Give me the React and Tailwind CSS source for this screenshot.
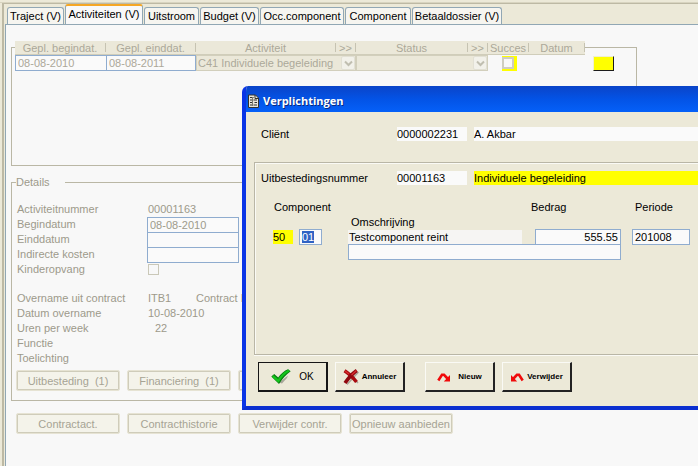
import React from "react";

const TABS = [
  { label: "Traject (V)", width: "w-[57px]" },
  { label: "Activiteiten (V)", width: "w-[78px]", active: true },
  { label: "Uitstroom", width: "w-[55px]" },
  { label: "Budget (V)", width: "w-[59px]" },
  { label: "Occ.component", width: "w-[84px]" },
  { label: "Component", width: "w-[66px]" },
  { label: "Betaaldossier (V)", width: "w-[90px]" },
];

const blueField =
  "block rounded-none border border-[#8faccf] bg-[#fafafa] px-[2px] outline-none";

function Tab({ label, width, active }) {
  return (
    <button
      type="button"
      role="tab"
      aria-selected={!!active}
      className={
        width +
        " flex shrink-0 items-center justify-center whitespace-nowrap rounded-t-[3px] border border-b-0 text-black " +
        (active
          ? "h-5 border-[#91a7b4] border-t-2 border-t-[#f5a623] bg-[#f8f8f8] pb-[3px]"
          : "h-[17px] border-[#91a7b4] bg-[#f6f5f0]")
      }
    >
      {label}
    </button>
  );
}

function DisabledSelect({ label, value }) {
  return (
    <div className="relative h-4 border border-[#d2cfbc] bg-[#ebe8d9]">
      <select
        disabled
        aria-label={label}
        defaultValue={value}
        className="block h-[14px] w-full appearance-none bg-transparent pl-px leading-[14px] text-[#aca899] opacity-100"
      >
        <option>{value}</option>
      </select>
      <span className="pointer-events-none absolute right-0 top-0 flex h-[14px] w-[14px] items-center justify-center rounded-[2px] border border-[#e2e0d4] bg-[#f2f1ea]">
        <svg viewBox="0 0 9 7" className="h-[7px] w-[9px]" fill="none" stroke="#c0beb0" strokeWidth="2">
          <path d="M1 1.5 4.5 5 8 1.5" />
        </svg>
      </span>
    </div>
  );
}

function HeaderCell({ children }) {
  return (
    <th className="bg-[#ebe8d9] p-0 font-normal">
      <div className="flex h-[14px] items-center justify-center border-b border-[#d0cdba]">
        <span className="flex-1 whitespace-nowrap text-center">{children}</span>
        <span className="h-[9px] w-px bg-[#c6c3b2]" />
      </div>
    </th>
  );
}

function ActivityTable() {
  return (
    <table className="-mt-[7px] ml-[3px] w-[600px] table-fixed border-collapse text-[#aca899]">
      <colgroup>
        <col className="w-[91px]" />
        <col className="w-[90px]" />
        <col className="w-[140px]" />
        <col className="w-5" />
        <col className="w-[112px]" />
        <col className="w-5" />
        <col className="w-[41px]" />
        <col className="w-[56px]" />
        <col />
      </colgroup>
      <thead>
        <tr>
          <HeaderCell>Gepl. begindat.</HeaderCell>
          <HeaderCell>Gepl. einddat.</HeaderCell>
          <HeaderCell>Activiteit</HeaderCell>
          <HeaderCell>&gt;&gt;</HeaderCell>
          <HeaderCell>Status</HeaderCell>
          <HeaderCell>&gt;&gt;</HeaderCell>
          <HeaderCell>Succes</HeaderCell>
          <HeaderCell>Datum</HeaderCell>
          <td className="p-0" />
        </tr>
      </thead>
      <tbody>
        <tr>
          <td className="p-0">
            <input aria-label="Gepl. begindat." disabled defaultValue="08-08-2010" className={blueField + " h-4 w-full border-r-0"} />
          </td>
          <td className="p-0">
            <input aria-label="Gepl. einddat." disabled defaultValue="08-08-2011" className={blueField + " h-4 w-full"} />
          </td>
          <td colSpan={2} className="p-0">
            <DisabledSelect label="Activiteit" value="C41 Individuele begeleiding" />
          </td>
          <td colSpan={2} className="p-0">
            <DisabledSelect label="Status" value="" />
          </td>
          <td className="p-0">
            <span className="ml-[14px] flex h-[15px] w-[15px] bg-[#ffff00] pt-px">
              <input
                type="checkbox"
                aria-label="Succes"
                disabled
                className="block h-3 w-3 appearance-none border-2 border-[#cfcdc0] bg-[#f8f8f8]"
              />
            </span>
          </td>
          <td className="p-0" />
          <td className="p-0">
            <button
              type="button"
              aria-label="Datum"
              className="ml-2 block h-[15px] w-[21px] border-b border-r border-[#1c1c1c] bg-[#ffff00] border-l border-t border-l-[#f0f0d0] border-t-[#f0f0d0]"
            />
          </td>
        </tr>
      </tbody>
    </table>
  );
}

function DetailRow({ label, htmlFor, children }) {
  return (
    <div className="flex h-[15px] items-start leading-[15px]">
      {htmlFor ? (
        <label htmlFor={htmlFor} className="w-[130px] shrink-0">
          {label}
        </label>
      ) : (
        <span className="w-[130px] shrink-0">{label}</span>
      )}
      {children}
    </div>
  );
}

function SoftButton({ children }) {
  return (
    <button
      type="button"
      disabled
      className="flex h-[21px] w-[104px] shrink-0 items-center justify-center whitespace-pre rounded-[2px] border border-[#e6e3d3] bg-[#f4f3ea] text-[#a6a394] shadow-[inset_0_0_0_1px_#cfccba]"
    >
      {children}
    </button>
  );
}

function Details() {
  return (
    <fieldset className="mt-[9px] h-[226px] w-[626px] border border-[#bab7a5] pl-1 text-[#9d9a8b]">
      <legend className="h-[14px] w-[49px] leading-[14px]">Details</legend>
      <div className="pl-px pt-[13px]">
        <DetailRow label="Activiteitnummer">
          <span className="pl-px">00001163</span>
        </DetailRow>
        <DetailRow label="Begindatum" htmlFor="begin">
          <input id="begin" disabled defaultValue="08-08-2010" className={blueField + " h-4 w-[92px]"} />
        </DetailRow>
        <DetailRow label="Einddatum" htmlFor="eind">
          <input id="eind" disabled className={blueField + " h-4 w-[92px]"} />
        </DetailRow>
        <DetailRow label="Indirecte kosten" htmlFor="kosten">
          <input id="kosten" disabled className={blueField + " h-4 w-[92px]"} />
        </DetailRow>
        <DetailRow label="Kinderopvang" htmlFor="opvang">
          <input
            id="opvang"
            type="checkbox"
            disabled
            className="ml-px mt-[2px] block h-[11px] w-[11px] appearance-none border border-[#cac8b8] bg-[#f8f8f8]"
          />
        </DetailRow>
        <div className="h-[14px]" />
        <DetailRow label="Overname uit contract">
          <span className="w-[49px] pl-px">ITB1</span>
          <span>Contract B</span>
        </DetailRow>
        <DetailRow label="Datum overname">
          <span className="pl-px">10-08-2010</span>
        </DetailRow>
        <DetailRow label="Uren per week">
          <span className="pl-2">22</span>
        </DetailRow>
        <DetailRow label="Functie" />
        <DetailRow label="Toelichting" />
      </div>
      <div className="mt-1 flex gap-[7px]">
        <SoftButton>{"Uitbesteding  (1)"}</SoftButton>
        <SoftButton>{"Financiering  (1)"}</SoftButton>
        <SoftButton />
      </div>
    </fieldset>
  );
}

function DialogButton({ icon, children, primary, className }) {
  return (
    <button
      type="button"
      className={
        "flex h-[30px] w-[70px] shrink-0 items-center justify-center bg-[#ece9d8] text-black " +
        (primary
          ? "gap-2 border border-b-2 border-r-2 border-[#161616] text-[10px] "
          : "gap-[3px] border border-b-2 border-r-2 border-b-[#222222] border-l-[#fafaf5] border-r-[#222222] border-t-[#fafaf5] text-[8px] font-bold ") +
        (className || "")
      }
    >
      {icon}
      <span>{children}</span>
    </button>
  );
}

function CheckIcon() {
  return (
    <svg viewBox="0 0 20 16" className="h-4 w-5">
      <path d="M8 13.500 17 6.500 16 9 11 14.500z" fill="#a9a79b" />
      <path d="M0.300 7.500 3.200 5 7.200 8.500Q11.500 2.500 17 0.300L19.700 2.200Q13 7 8 15z" fill="#087a10" />
      <path d="M1.800 7 7.300 11.800Q11.500 5 18 1.500" fill="none" stroke="#14c41c" strokeWidth="2.400" />
    </svg>
  );
}

function CrossIcon() {
  return (
    <svg viewBox="0 0 16 16" className="h-4 w-4" fill="none">
      <path d="M4 3 15 14M15.500 3 4 15.500" stroke="#aaa79a" strokeWidth="1.500" />
      <path d="M1.500 1.800Q7.500 5.500 13.500 13" stroke="#a80a10" strokeWidth="3.600" />
      <path d="M13.800 1.500Q7.500 6 2 14" stroke="#900810" strokeWidth="3.600" />
      <path d="M13.500 1.500 8.500 6M2 2 6 5" stroke="#da3030" strokeWidth="1.200" />
    </svg>
  );
}

function ArrowIcon({ flip }) {
  return (
    <svg viewBox="0 0 14 10" className={"h-[10px] w-[14px] " + (flip ? "-scale-x-100" : "")}>
      <path d="M1.300 8.500 5 2.800H7L10.500 6.500" fill="none" stroke="#f00a0a" strokeWidth="2.600" />
      <path d="M13 3V9.500H6.800z" fill="#f00a0a" />
    </svg>
  );
}

function DocumentIcon() {
  return (
    <svg viewBox="0 0 11 14" className="h-[14px] w-[11px]">
      <path d="M0.500 1H7.500L10.500 4V13.500H0.500z" fill="#e9e6da" stroke="#33322e" />
      <path d="M7 1V4.500H10.500" fill="none" stroke="#33322e" />
      <path d="M2 3.500H5.500M2 6H4M5.500 6H9M2 8.500H5M6.500 8.500H9M2 11H4M5.500 11H9" stroke="#33322e" />
      <path d="M4.500 3V12" stroke="#7b796e" />
    </svg>
  );
}

function ReadOnly({ className, children }) {
  return <output className={"block h-[14px] whitespace-nowrap leading-[15px] " + className}>{children}</output>;
}

function ComponentFields() {
  return (
    <div className="mt-[15px] pl-[18px]">
      <div className="flex h-[15px] leading-[15px]">
        <span id="lbl-component" className="w-[257px] pl-px">Component</span>
        <label htmlFor="bedrag" className="w-[105px] pl-px">Bedrag</label>
        <label htmlFor="periode">Periode</label>
      </div>
      <div className="h-[14px] pl-[78px] leading-[14px]">
        <label htmlFor="omschrijving">Omschrijving</label>
      </div>
      <div className="flex h-[15px]">
        <div className="w-[26px] pt-px">
          <ReadOnly className="w-5 bg-[#ffff00]">50</ReadOnly>
        </div>
        <div className="w-[49px]">
          <div className="flex h-4 w-[23px] items-center border border-[#8faccf] bg-[#fafafa] pl-[2px]">
            <input
              aria-labelledby="lbl-component"
              defaultValue="01"
              className="block h-3 w-3 bg-[#2f62c4] leading-3 text-white outline-none"
            />
          </div>
        </div>
        <div className="w-[187px] pt-px">
          <ReadOnly className="w-[174px] bg-[#f6f5f3] pl-px">Testcomponent reint</ReadOnly>
        </div>
        <div className="w-[97px]">
          <input id="bedrag" defaultValue="555.55" className={blueField + " h-4 w-[86px] text-right"} />
        </div>
        <input id="periode" defaultValue="201008" className={blueField + " h-4 w-[58px]"} />
      </div>
      <input id="omschrijving" className={blueField + " ml-[75px] h-4 w-[273px]"} />
    </div>
  );
}

function Dialog() {
  return (
    <section
      role="dialog"
      aria-labelledby="dlg-title"
      className="absolute left-[242px] right-0 top-[86px] overflow-hidden rounded-tl-[6px] border-b-4 border-l-4 border-b-[#0a2fd0] border-l-[#0a35e6] bg-[#ece9d8] text-black"
    >
      <header className="-ml-1 flex h-[26px] items-center gap-1 bg-linear-to-b from-[#0a44c8] via-[#0353e6] to-[#0560f8] pl-[6px] pt-[3px]">
        <DocumentIcon />
        <h1
          id="dlg-title"
          className="font-['Open_Sans','Noto_Sans',sans-serif] text-[11px] font-bold leading-4 text-white [text-shadow:1px_1px_0_#0a2a80]"
        >
          Verplichtingen
        </h1>
      </header>
      <div className="pb-[14px] pl-2 pt-[15px]">
        <div className="flex pl-[7px]">
          <span className="w-[136px] leading-[14px]">Cliënt</span>
          <ReadOnly className="mr-[7px] w-[70px] bg-[#fafafa]">0000002231</ReadOnly>
          <ReadOnly className="flex-1 bg-[#fafafa]">A. Akbar</ReadOnly>
        </div>
        <div className="mt-[21px] h-[193px] border-b border-l border-t border-[#b9b6a6] shadow-[inset_1px_1px_0_#fafaf5,0_1px_0_#fafaf5]">
          <div className="flex pl-[6px] pt-2">
            <span className="w-[136px] leading-[14px]">Uitbestedingsnummer</span>
            <ReadOnly className="mr-[7px] w-[70px] bg-[#fafafa]">00001163</ReadOnly>
            <ReadOnly className="flex-1 bg-[#ffff00]">Individuele begeleiding</ReadOnly>
          </div>
          <ComponentFields />
        </div>
        <div className="mt-[7px] flex gap-[7px] pl-1">
          <DialogButton primary icon={<CheckIcon />}>OK</DialogButton>
          <DialogButton icon={<CrossIcon />}>Annuleer</DialogButton>
          <DialogButton className="ml-[13px]" icon={<span className="mr-1"><ArrowIcon /></span>}>Nieuw</DialogButton>
          <DialogButton icon={<ArrowIcon flip />}>Verwijder</DialogButton>
        </div>
      </div>
    </section>
  );
}

export default function App() {
  return (
    <div className="relative flex min-h-screen flex-col overflow-hidden bg-[#ece9d8] font-['Liberation_Sans',Arial,sans-serif] text-[11px] leading-[14px]">
      <div className="h-[3px] border-b border-[#d8d4c0]" />
      <div className="ml-[2px] flex flex-1 flex-col border-l-2 border-t border-[#bdb9a4] pl-px">
        <div role="tablist" className="flex h-5 items-end gap-px pl-[2px]">
          {TABS.map((tab) => (
            <Tab key={tab.label} {...tab} />
          ))}
        </div>
        <main className="flex-1 border-l border-t border-[#91a7b4] bg-[#f8f8f8] pl-[5px] pt-[22px]">
          <div className="h-[119px] w-[626px] border border-[#bab7a5]">
            <ActivityTable />
          </div>
          <Details />
          <div className="mt-3 flex gap-[7px] pl-[5px]">
            <SoftButton>Contractact.</SoftButton>
            <SoftButton>Contracthistorie</SoftButton>
            <SoftButton>Verwijder contr.</SoftButton>
            <SoftButton>Opnieuw aanbieden</SoftButton>
          </div>
        </main>
      </div>
      <Dialog />
    </div>
  );
}
